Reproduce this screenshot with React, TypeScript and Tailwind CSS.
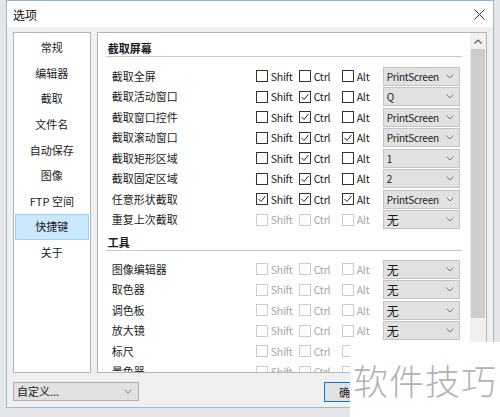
const navItems = ["常规", "编辑器", "截取", "文件名", "自动保存", "图像", "FTP 空间", "快捷键", "关于"];

type Row = { label: string; shift?: boolean; ctrl?: boolean; alt?: boolean; key: string; disabled?: boolean };

const captureRows: Row[] = [
  { label: "截取全屏", key: "PrintScreen" },
  { label: "截取活动窗口", ctrl: true, key: "Q" },
  { label: "截取窗口控件", ctrl: true, key: "PrintScreen" },
  { label: "截取滚动窗口", ctrl: true, alt: true, key: "PrintScreen" },
  { label: "截取矩形区域", ctrl: true, key: "1" },
  { label: "截取固定区域", ctrl: true, key: "2" },
  { label: "任意形状截取", shift: true, ctrl: true, alt: true, key: "PrintScreen" },
  { label: "重复上次截取", key: "无", disabled: true },
];

const toolRows: Row[] = [
  { label: "图像编辑器", key: "无", disabled: true },
  { label: "取色器", key: "无", disabled: true },
  { label: "调色板", key: "无", disabled: true },
  { label: "放大镜", key: "无", disabled: true },
  { label: "标尺", key: "无", disabled: true },
  { label: "景色器", key: "无", disabled: true },
];

function Chevron() {
  return (
    <svg width="8" height="5" viewBox="0 0 8 5" className="shrink-0">
      <polyline points="0.5,0.5 4,4 7.5,0.5" fill="none" stroke="#7a7a7a" strokeWidth="1" />
    </svg>
  );
}

function Check({ label, checked, disabled }: { label: string; checked?: boolean; disabled?: boolean }) {
  return (
    <div className="flex items-center gap-[3px]">
      <div
        className={`w-[12px] h-[12px] border bg-white flex items-center justify-center ${
          disabled ? "border-[#cccccc]" : "border-[#333333]"
        }`}
      >
        {checked && (
          <svg width="10" height="10" viewBox="0 0 10 10">
            <polyline points="1.5,5 4,7.5 8.5,2" fill="none" stroke="#222" strokeWidth="1" />
          </svg>
        )}
      </div>
      <span className={`text-[10.5px] tracking-[-0.2px] ${disabled ? "text-[#a6a6a6]" : "text-[#1a1a1a]"}`}>
        {label}
      </span>
    </div>
  );
}

function HotkeyRow({ row }: { row: Row }) {
  const latin = row.key !== "无";
  return (
    <div className="flex items-center h-[20.5px] pl-[6px]">
      <div className="w-[144px] text-[#1a1a1a]">{row.label}</div>
      <div className="w-[43px]">
        <Check label="Shift" checked={row.shift} disabled={row.disabled} />
      </div>
      <div className="w-[43px]">
        <Check label="Ctrl" checked={row.ctrl} disabled={row.disabled} />
      </div>
      <div className="w-[41px]">
        <Check label="Alt" checked={row.alt} disabled={row.disabled} />
      </div>
      <div className="w-[77px] h-[19px] bg-[#e1e1e1] border border-[#c4c4c4] flex items-center justify-between pl-[3px] pr-[5px] text-[#1a1a1a]">
        <span className={latin ? "text-[10px] tracking-[-0.25px]" : "text-[12px]"}>{row.key}</span>
        <Chevron />
      </div>
    </div>
  );
}

function SectionHeader({ title }: { title: string }) {
  return (
    <div className="h-[21px] flex items-end border-b border-[#c8c8c8] pl-[2px] pb-[1px]">
      <span className="font-bold leading-[13px] text-[#1a1a1a]">{title}</span>
    </div>
  );
}

export default function App() {
  return (
    <div
      className="w-[500px] h-[417px] bg-[#e4e6e8] overflow-hidden relative text-[11px] leading-[13px]"
      style={{ fontFamily: '"Noto Sans CJK SC", "Noto Sans", sans-serif' }}
    >
      <div className="pl-[6px]">
        {/* Window */}
        <div className="w-[488px] h-[408px] bg-[#f0f0f0] border border-[#9db8cf] border-t-[#8fb6d8] flex flex-col">
          {/* Title bar */}
          <div className="h-[26px] bg-white flex items-center justify-between pl-[6px] pr-[8px]">
            <span className="text-[12px] text-[#111]">选项</span>
            <svg width="11" height="11" viewBox="0 0 11 11">
              <path d="M0.5 0.5 L10.5 10.5 M10.5 0.5 L0.5 10.5" stroke="#333" strokeWidth="1" />
            </svg>
          </div>

          {/* Body */}
          <div className="flex-1 flex flex-col px-[6px] pt-[5px]">
            <div className="h-[341px] flex gap-[6px]">
              {/* Nav list */}
              <div className="w-[78px] bg-white border border-[#b4b4b4] pt-[2px] px-[1px]">
                {navItems.map((item) => (
                  <div
                    key={item}
                    className={`h-[25.6px] flex items-center justify-center text-[#1a1a1a] ${
                      item === "快捷键" ? "bg-[#cce8ff] border border-[#99d1ff]" : ""
                    }`}
                  >
                    {item}
                  </div>
                ))}
              </div>

              {/* Settings panel */}
              <div className="w-[392px] bg-white border border-[#b4b4b4] flex overflow-hidden">
                <div className="flex-1 overflow-hidden pl-[8px] pr-[8px] pt-[3px]">
                  <SectionHeader title="截取屏幕" />
                  <div className="pt-[9px]">
                    {captureRows.map((r) => (
                      <HotkeyRow key={r.label} row={r} />
                    ))}
                  </div>
                  <SectionHeader title="工具" />
                  <div className="pt-[8px]">
                    {toolRows.map((r) => (
                      <HotkeyRow key={r.label} row={r} />
                    ))}
                  </div>
                </div>

                {/* Scrollbar */}
                <div className="w-[16px] bg-[#f0f0f0] flex flex-col">
                  <div className="h-[16px] flex items-center justify-center">
                    <svg width="8" height="5" viewBox="0 0 8 5">
                      <polyline points="0.5,4.5 4,1 7.5,4.5" fill="none" stroke="#555" strokeWidth="1.2" />
                    </svg>
                  </div>
                  <div className="mx-[1px] h-[269px] bg-[#cdcdcd]" />
                </div>
              </div>
            </div>

            {/* Footer */}
            <div className="flex items-start pt-[9px]">
              <div className="w-[126px] h-[19px] bg-[#e1e1e1] border border-[#adadad] flex items-center justify-between pl-[3px] pr-[6px] text-[#1a1a1a]">
                <span>自定义...</span>
                <Chevron />
              </div>
              <div className="ml-[185px] w-[75px] h-[20px] bg-[#e1e1e1] border border-[#0078d7] flex items-center pl-[14px] text-[#1a1a1a]">
                确定
              </div>
            </div>
          </div>
        </div>
      </div>

      {/* Watermark overlay */}
      <div className="absolute left-[350px] top-[342px] right-0 bottom-0 bg-white flex items-center justify-center">
        <span className="text-[35px] leading-[35px] text-[#b3b3b3] tracking-[1px]" style={{ fontWeight: 300 }}>
          软件技巧
        </span>
      </div>
    </div>
  );
}
